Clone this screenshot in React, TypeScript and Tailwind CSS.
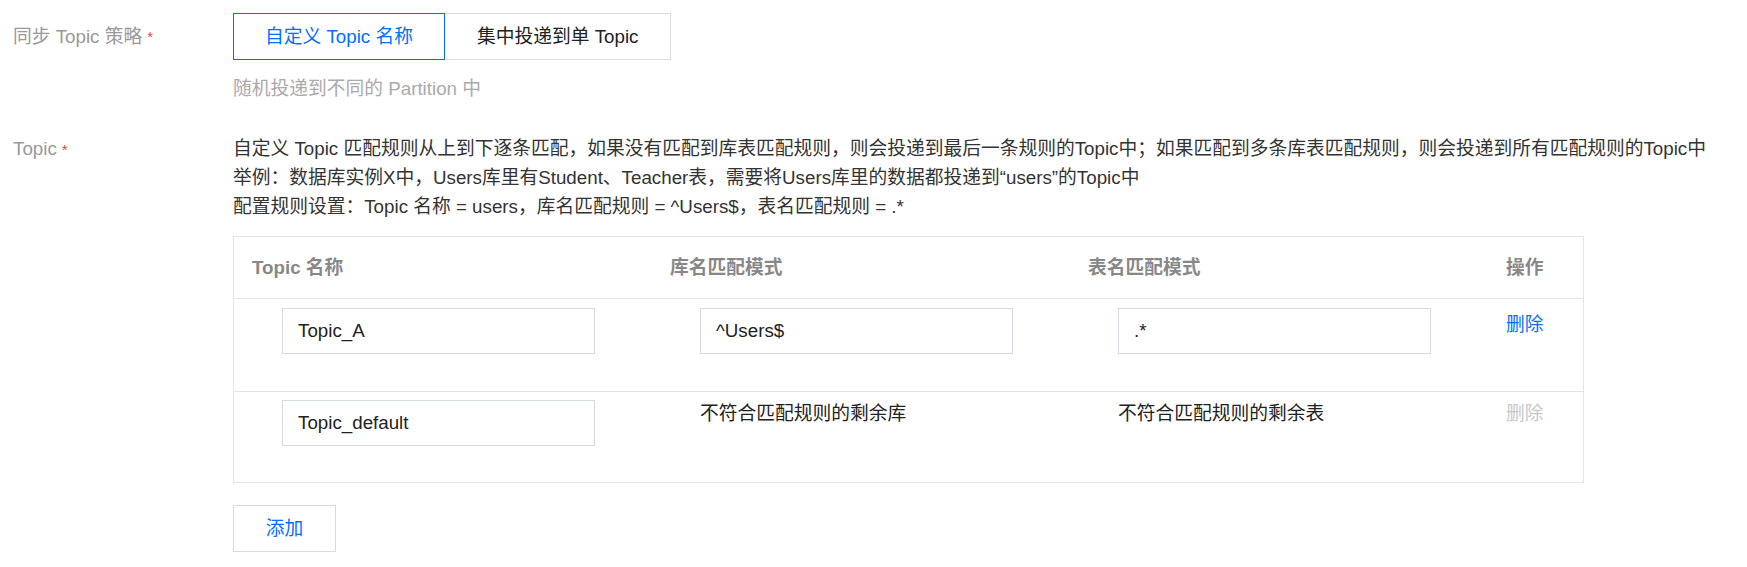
import { useState } from 'react'

type Rule = { topic: string; db: string | null; table: string | null; removable: boolean }

const rules: Rule[] = [
  { topic: 'Topic_A', db: '^Users$', table: '.*', removable: true },
  { topic: 'Topic_default', db: null, table: null, removable: false },
]

const COLS = 'grid grid-cols-[418px_418px_418px_1fr]'

function Field({ value }: { value: string }) {
  return (
    <input
      readOnly
      value={value}
      className="ml-[48px] w-[313px] h-[46px] border border-[#d6dbe3] px-[15px] text-[18.75px] text-[#222] outline-none bg-white"
    />
  )
}

export default function App() {
  const [mode, setMode] = useState<'custom' | 'single'>('custom')

  return (
    <div className="min-h-screen bg-white pt-[13px] pl-[13px] font-['Liberation_Sans','Noto_Sans_CJK_SC',sans-serif] text-[18.75px] leading-[27px]">
      {/* 同步策略 */}
      <div className="flex">
        <div className="w-[220px] h-[47px] flex items-center text-[#999]">
          同步 Topic 策略<span className="text-[#e54545] ml-[5px] text-[15px]">*</span>
        </div>
        <div>
          <div className="flex">
            <button
              onClick={() => setMode('custom')}
              className={
                mode === 'custom'
                  ? 'relative z-10 h-[47px] px-[31px] border border-[#006eff] text-[#006eff] bg-white'
                  : 'h-[47px] px-[31px] border border-[#ddd] text-[#222] bg-white'
              }
            >
              自定义 Topic 名称
            </button>
            <button
              onClick={() => setMode('single')}
              className={
                mode === 'single'
                  ? 'relative z-10 -ml-px h-[47px] px-[32px] border border-[#006eff] text-[#006eff] bg-white'
                  : '-ml-px h-[47px] px-[32px] border border-[#ddd] text-[#222] bg-white'
              }
            >
              集中投递到单 Topic
            </button>
          </div>
          <div className="mt-[15px] text-[#aaa]">随机投递到不同的 Partition 中</div>
        </div>
      </div>

      {/* Topic */}
      <div className="flex mt-[32px]">
        <div className="w-[220px] leading-[29px] text-[#999]">
          Topic<span className="text-[#e54545] ml-[5px] text-[15px]">*</span>
        </div>
        <div>
          <div className="text-[#333] leading-[29px] whitespace-nowrap">
            <p>自定义 Topic 匹配规则从上到下逐条匹配，如果没有匹配到库表匹配规则，则会投递到最后一条规则的Topic中；如果匹配到多条库表匹配规则，则会投递到所有匹配规则的Topic中</p>
            <p>举例：数据库实例X中，Users库里有Student、Teacher表，需要将Users库里的数据都投递到“users”的Topic中</p>
            <p>配置规则设置：Topic 名称 = users，库名匹配规则 = ^Users$，表名匹配规则 = .*</p>
          </div>

          <div className="mt-[15px] w-[1351px] border border-[#e2e6ec]">
            <div className={`${COLS} h-[62px] items-center border-b border-[#e2e6ec] font-bold text-[#888]`}>
              <div className="pl-[18px]">Topic 名称</div>
              <div className="pl-[18px]">库名匹配模式</div>
              <div className="pl-[18px]">表名匹配模式</div>
              <div className="pl-[18px]">操作</div>
            </div>

            {rules.map((r, i) => (
              <div
                key={r.topic}
                className={
                  i === 0
                    ? `${COLS} h-[93px] pt-[9px] border-b border-[#e2e6ec]`
                    : `${COLS} h-[90px] pt-[8px]`
                }
              >
                <div>
                  <Field value={r.topic} />
                </div>
                <div>
                  {r.db !== null ? (
                    <Field value={r.db} />
                  ) : (
                    <div className="ml-[48px] text-[#222]">不符合匹配规则的剩余库</div>
                  )}
                </div>
                <div>
                  {r.table !== null ? (
                    <Field value={r.table} />
                  ) : (
                    <div className="ml-[48px] text-[#222]">不符合匹配规则的剩余表</div>
                  )}
                </div>
                <div className={r.removable ? 'pl-[18px] pt-[3px]' : 'pl-[18px]'}>
                  <span className={r.removable ? 'text-[#006eff] cursor-pointer' : 'text-[#c8c8c8]'}>删除</span>
                </div>
              </div>
            ))}
          </div>

          <button className="mt-[22px] w-[103px] h-[47px] border border-[#d6dbe3] text-[#006eff] bg-white">
            添加
          </button>
        </div>
      </div>
    </div>
  )
}
